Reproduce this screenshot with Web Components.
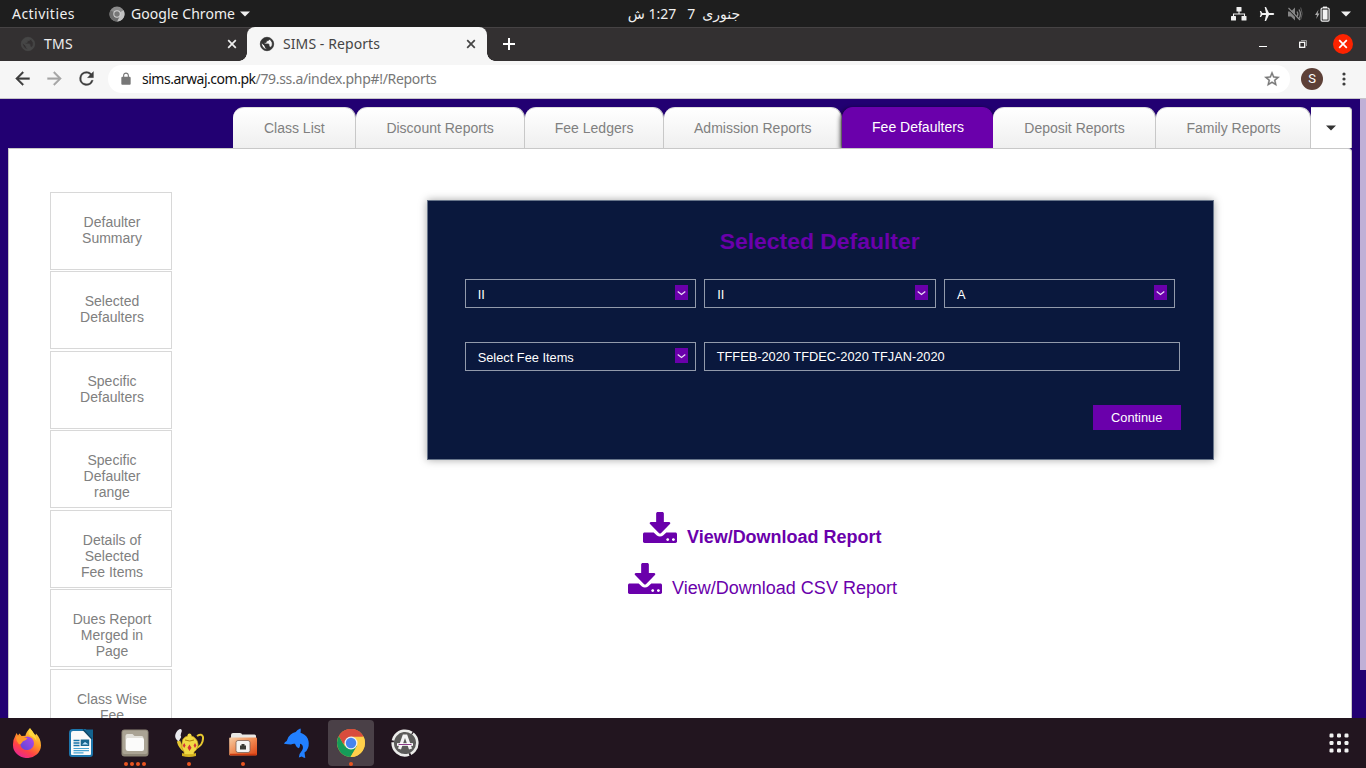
<!DOCTYPE html>
<html lang="en">
<head>
<meta charset="utf-8">
<title>SIMS - Reports</title>
<style>
html,body{margin:0;height:100%;overflow:hidden;background:#220072}
body{font-family:"Liberation Sans",Arial,sans-serif}
</style>
</head>
<body>
<sims-desktop></sims-desktop>
<script>
const define = (name, html, after) => {
  const t = document.createElement('template');
  t.innerHTML = html;
  customElements.define(name, class extends HTMLElement {
    constructor() {
      super();
      this.attachShadow({ mode: 'open' }).appendChild(t.content.cloneNode(true));
    }
    connectedCallback() { if (after) after(this, this.shadowRoot); }
  });
};

/* Single-line label whose tracking is adjusted to fill the width given in "w". */
define('fit-label', `<style>:host{display:inline-block;white-space:pre;flex:none}span{display:inline-block}</style><span><slot></slot></span>`,
  (el, root) => {
    const span = root.querySelector('span');
    const want = parseFloat(el.getAttribute('w'));
    const natural = span.getBoundingClientRect().width;
    el.style.letterSpacing = ((want - natural) / el.textContent.length).toFixed(3) + 'px';
  });

/* Icon set */
const GLYPHS = {
  globe: ['0 0 24 24', '<path fill="currentColor" d="M12 2C6.48 2 2 6.48 2 12s4.48 10 10 10 10-4.48 10-10S17.52 2 12 2zm-1 17.93c-3.95-.49-7-3.85-7-7.93 0-.62.08-1.21.21-1.79L9 15v1c0 1.1.9 2 2 2v1.93zm6.9-2.54c-.26-.81-1-1.39-1.9-1.39h-1v-3c0-.55-.45-1-1-1H8v-2h2c.55 0 1-.45 1-1V7h2c1.1 0 2-.9 2-2v-.41c2.93 1.19 5 4.06 5 7.41 0 2.08-.8 3.97-2.1 5.39z" stroke="currentColor" stroke-width="1.200"/>'],
  back: ['0 0 24 24', '<path fill="currentColor" stroke="currentColor" stroke-width=".4" d="M20 11H7.83l5.59-5.59L12 4l-8 8 8 8 1.41-1.41L7.83 13H20v-2z"/>'],
  forward: ['0 0 24 24', '<path fill="currentColor" stroke="currentColor" stroke-width=".4" d="M4 13h12.17l-5.59 5.59L12 20l8-8-8-8-1.41 1.41L16.17 11H4v2z"/>'],
  reload: ['0 0 24 24', '<path fill="currentColor" stroke="currentColor" stroke-width=".3" d="M17.65 6.35A7.96 7.96 0 0 0 12 4a8 8 0 1 0 7.73 10h-2.08A6 6 0 1 1 12 6c1.66 0 3.14.69 4.22 1.78L13 11h7V4z"/>'],
  lock: ['0 0 24 24', '<path fill="currentColor" d="M18 8h-1V6c0-2.760-2.240-5-5-5S7 3.240 7 6v2H6c-1.100 0-2 .9-2 2v10c0 1.100.9 2 2 2h12c1.100 0 2-.9 2-2V10c0-1.100-.9-2-2-2zM8.900 8V6c0-1.710 1.390-3.100 3.100-3.100s3.100 1.390 3.100 3.100v2z"/>'],
  star: ['0 0 24 24', '<path fill="currentColor" stroke="currentColor" stroke-width=".5" d="M22 9.240l-7.190-.620L12 2 9.190 8.630 2 9.240l5.460 4.730L5.820 21 12 17.270 18.180 21l-1.630-7.030zM12 15.400l-3.760 2.270 1-4.280-3.320-2.880 4.380-.380L12 6.100l1.710 4.040 4.380.380-3.320 2.880 1 4.280z"/>'],
  close: ['0 0 10 10', '<path d="M1.200 1.200l7.600 7.600M8.800 1.200L1.200 8.800" stroke="currentColor" stroke-width="1.700" fill="none"/>'],
  plus: ['0 0 14 14', '<path d="M7 1v12M1 7h12" stroke="currentColor" stroke-width="2" fill="none"/>'],
  down: ['0 0 10 6', '<path d="M0 .5h10L5 5.500z" fill="currentColor"/>'],
  chev: ['0 0 9 6', '<path d="M.7 1.600L4.500 4.400L8.300 1.600" stroke="currentColor" stroke-width="1.300" fill="none"/>'],
  dots: ['0 0 4 14', '<g fill="currentColor"><circle cx="2" cy="2" r="1.600"/><circle cx="2" cy="7" r="1.600"/><circle cx="2" cy="12" r="1.600"/></g>'],
  network: ['0 0 16 14', '<g fill="currentColor"><rect x="5.500" y="0" width="5" height="4.500" rx=".6"/><rect x="0" y="9" width="5" height="4.500" rx=".6"/><rect x="10.500" y="9" width="5" height="4.500" rx=".6"/></g><path d="M8 4v3M2.500 9.500V7h11v2.500" stroke="currentColor" stroke-width="1.100" fill="none"/>'],
  plane: ['0 0 24 24', '<path transform="rotate(90 12 12)" fill="currentColor" d="M22.500 15.500v-2L13.600 9V3.500C13.600 2.400 13 1.200 12 1.200s-1.600 1.200-1.600 2.300V9L1.500 13.500v2l8.900-2V19L7.500 21v1.800l4.500-1.300 4.500 1.300V21l-2.900-2v-5.500z"/>'],
  mute: ['0 0 16 16', '<path d="M1 5.500h3l4-4v13l-4-4H1z" fill="#858585"/><path d="M10 5.500q1.700 2.500 0 5M12 3.500q2.800 4.500 0 9" stroke="#858585" stroke-width="1.300" fill="none"/><path d="M13.700 1.500q3 6 0 12" stroke="#5c5c5c" stroke-width="1" fill="none"/><path d="M1.500 3l11 11.500" stroke="#1e1e1e" stroke-width="1.600"/><path d="M1.500 2l11.500 12" stroke="#8c8c8c" stroke-width="1.100"/>'],
  battery: ['0 0 15 16', '<path d="M3.600 3.500L0 9h2L1.200 13 4.500 7.600H2.600z" fill="#aaa"/><path d="M8 2V.6h4V2" fill="#fff"/><rect x="6.100" y="2" width="8" height="13.200" rx="1.200" stroke="#f4f4f4" stroke-width="1.200" fill="none"/><rect x="7.600" y="3.600" width="5" height="10" fill="#f4f4f4"/>'],
  min: ['0 0 8 10', '<path d="M0 7.500h8" stroke="#fff" stroke-width="1"/>'],
  restore: ['0 0 8 8', '<path d="M2 .5h5.500V6" stroke="#999" fill="none"/><rect x=".7" y="2.300" width="5" height="5" stroke="#fff" stroke-width="1.300" fill="none"/>'],
  chromegrey: ['0 0 16 16', '<circle cx="8" cy="8" r="7.600" fill="#8b8b8b"/><path d="M8 8L14.600 4.300A7.600 7.600 0 0 1 8 15.600L11 9.500z" fill="#c2c2c2"/><path d="M8 8L1.500 4.200A7.600 7.600 0 0 0 8 15.600L11 9.500z" fill="#6c6c6c"/><circle cx="8" cy="8" r="3.700" fill="#d2d2d2"/><circle cx="8" cy="8" r="2.700" fill="#777"/>'],
  download: ['0 0 512 512', '<path fill="currentColor" d="M222 0h68c13.300 0 24 10.700 24 24v140h77.700c17.800 0 26.700 21.500 14.100 34.100L269.700 350c-7.500 7.500-19.800 7.500-27.300 0L106.100 198c-12.600-12.600-3.700-34 14.100-34H198V24c0-13.300 10.700-24 24-24zm290 362v126c0 13.300-10.700 24-24 24H24c-13.300 0-24-10.700-24-24V362c0-13.300 10.700-24 24-24h136.700l49 49c25 25 67 25 92 0l49-49H488c13.300 0 24 10.700 24 24zm-118 94c0-12-10-22-22-22s-22 10-22 22 10 22 22 22 22-10 22-22zm86 0c0-12-10-22-22-22s-22 10-22 22 10 22 22 22 22-10 22-22z"/>'],
  firefox: ['0 0 30 30', '<defs><linearGradient id="a" x1=".8" y1=".05" x2=".25" y2="1"><stop offset="0" stop-color="#ffe141"/><stop offset=".4" stop-color="#ff9525"/><stop offset=".7" stop-color="#ff4245"/><stop offset="1" stop-color="#e5239b"/></linearGradient><linearGradient id="b" x1="1" y1="0" x2="0" y2="1"><stop offset="0" stop-color="#b847e8"/><stop offset="1" stop-color="#5947d8"/></linearGradient></defs><path fill="url(#a)" d="M3 8.500L4.500 5 6 7.500l1.500-2 2 2.500 4-.2q0-3 4.500-7.800 2 2.500 3 5.300l2.500 2L24 5.500q5 5 5 12A14 12.800 0 0 1 1 17Q.8 12 3 8.500z"/><path fill="url(#b)" d="M9 12q2.500-3 6.500-3.500 6 .7 6.500 7a7 7 0 0 1-13.500 2z"/><path fill="#ff982a" d="M4 9q5-2 8.500.5l3 .8q-1 2-4.500 3-1.500 3-4 3-3-3-3-7.300z"/><path fill="#ffd83d" d="M18 .5q6 5.500 6.500 12.500-1.500-3.500-4.500-4.500Q14.500 6.500 18 .5z"/>'],
  writer: ['0 0 30 30', '<path d="M7 2h12l7 7v17a2 2 0 0 1-2 2H6a2 2 0 0 1-2-2V5a3 3 0 0 1 3-3z" fill="#fafafa" stroke="#1d76ac" stroke-width="2"/><path d="M17 1.500h10v9z" fill="#13638f"/><path d="M17 1.500l9 9.500" stroke="#0c4464" stroke-width="1.500"/><path d="M7.500 12.500h6M7.500 15h6M7.500 17.500h6" stroke="#1873a8" stroke-width="1.300"/><rect x="14.700" y="11.500" width="8.500" height="6.500" fill="#17658f"/><path d="M16 16.500l3-2.500 3.500 2.500z" fill="#bde5ff"/><path d="M7.500 20.500h15.500M7.500 22.700h15.500M7.500 24.900h10" stroke="#47a2d0" stroke-width="1.200"/>'],
  files: ['0 0 30 30', '<rect x="1.500" y="1.500" width="27" height="27" rx="3" fill="#8e8778"/><rect x="2.500" y="2.500" width="25" height="23.500" rx="2" fill="#aaa394"/><path d="M7.500 6h5l2 2h7q2 0 2 2v10.500q0 2-2 2h-14q-2 0-2-2V8q0-2 2-2z" fill="#e2e0da"/><path d="M7 10h15q2 0 2 2v9q0 2-2 2H8q-2 0-2-2v-9z" fill="#fbfbfa"/>'],
  teapot: ['0 0 30 30', '<path d="M23 8q5-3 6 1 .5 8-6.500 11" fill="none" stroke="#e5c62f" stroke-width="2"/><path d="M4.500 13q1.500 6 6 9" fill="none" stroke="#e5c62f" stroke-width="3.500"/><path d="M11 9q5-3 9 0 5 4 4 9-1 4-4 6v3H10v-3q-3-4-2-9 0-4 3-6z" fill="#f1da45" stroke="#b98c16" stroke-width=".7"/><path d="M8 25q7 3 14 0v3q-7 2-14 0z" fill="#d5b21f"/><circle cx="15.500" cy="7.500" r="2" fill="#f1da45"/><g fill="#d3333b"><path d="M15.500 16.500l2 3.200-2 3.200-2-3.200zM10.200 15l1.400 2.500-1.400 2.500-1.400-2.500zM21 15l1.400 2.500-1.400 2.500-1.400-2.500z"/></g><path d="M11 12q5 2 9 0" stroke="#ad7b0d" fill="none"/><path d="M4.500 13.500Q0 10 1.500 6T6 1q3 0 1 4.500-.8 2 .2 3.500-1 2-2.700 4.500z" fill="#e9e9ee"/>'],
  folder: ['0 0 30 30', '<defs><linearGradient id="f" x2="1" y2="1"><stop offset="0" stop-color="#f5cda5"/><stop offset=".5" stop-color="#f08a52"/><stop offset="1" stop-color="#dd4414"/></linearGradient></defs><path d="M3 7q0-2 2-2h7q2 0 2 1.500h12.500q1.500 0 1.500 1.500v8H3z" fill="#e9e7e4"/><rect x="1.200" y="9.500" width="27.800" height="18" rx="1" fill="url(#f)"/><path d="M2 26.500h26" stroke="#cd3b11" stroke-width="1.500"/><rect x="8" y="12.500" width="14" height="12" rx="2" fill="#f4f4f2" stroke="#7b6256" stroke-width=".8"/><path d="M12 21.500v-4h1.500V16h3v1.500H18v4z" fill="#393b35"/>'],
  dolphin: ['0 0 30 30', '<path fill="#2280ff" d="M2 15.800q.5-1.500 2.700-2.800.8-4 4-6.500 2-2 5-2.500 1.500-2.500 4.500-3.500 1 .2.300 4.300 5 1.500 7.200 5.700 2 5 .3 9.500-1 3-3.500 4.500.5 3.500.8 5.500-2-.3-3.500-1.500-1.500.5-3 1 0-3.500 2.500-6 2.500-3 1.200-6-1-1.500-2.500-1.700.5 2.500-1 4.500-2.500-.5-4-4.500-2-.5-4 .8-3 0-7-.8z"/>'],
  chrome: ['0 0 30 30', '<circle cx="15" cy="15" r="14" fill="#e8b936"/><path d="M15 15L2.900 8A14 14 0 0 1 27.100 8z" fill="#d94c3d"/><path d="M2.900 8a14 14 0 0 0 11.600 21L21 18 9 18.500z" fill="#159c59"/><path d="M15 8.500h12.400a14 14 0 0 1-12.900 20.500L21 18z" fill="#ffd04b"/><path d="M2.900 8A14 14 0 0 1 27.400 8.500H15v7H7z" fill="#d94c3d"/><circle cx="15" cy="15" r="6.500" fill="#f1f1f1"/><circle cx="15" cy="15" r="5.200" fill="#4684ef"/>'],
  updater: ['0 0 30 30', '<circle cx="15" cy="15" r="11.500" fill="#5c5b5a"/><circle cx="15" cy="15" r="12.300" fill="none" stroke="#ececea" stroke-width="2.600" stroke-dasharray="24 1.760" transform="rotate(-50 15 15)"/><path d="M9.500 21L14 8h2l4.500 13" fill="none" stroke="#f3f3f3" stroke-width="3.200"/><path d="M7 16.500h16" stroke="#fff" stroke-width="2.600"/><path d="M8.500 16.500h13" stroke="#8d3c88" stroke-width="1"/>'],
  grid: ['0 0 20 20', '<g fill="#f2f2f2">' + [2.500, 10, 17.500].map(y => [2.500, 10, 17.500].map(x => `<rect x="${x - 2}" y="${y - 2}" width="4" height="4" rx="1.200"/>`).join('')).join('') + '</g>']
};
define('ui-icon', `<style>:host{display:block;flex:none}svg{display:block;width:100%;height:100%}</style><div></div>`, (el, root) => {
  const [box, body] = GLYPHS[el.getAttribute('name')];
  const [w, h] = el.getAttribute('size').split('x');
  el.style.width = w + 'px'; el.style.height = (h || w) + 'px';
  const d = root.querySelector('div');
  d.style.height = '100%';
  d.innerHTML = `<svg viewBox="${box}" preserveAspectRatio="none">${body}</svg>`;
});

define('top-panel', `<style>
:host{display:flex;align-items:center;height:27px;background:#1e1e1e;color:#f0f0f0;font:14px/27px "Noto Sans",sans-serif;box-sizing:border-box;padding:0 15px 0 12px}
.l,.r{flex:1;display:flex;align-items:center}.r{justify-content:flex-end}
.l ui-icon[name=chromegrey]{margin:0 6px 0 34px}.l ui-icon[name=down]{margin-left:5px}
.c{direction:rtl;display:flex;font:14px/27px "Noto Sans","DejaVu Sans",sans-serif;margin-left:5px}.c .t{margin-right:11px}.c .m{margin-left:7px}
</style>
<div class="l"><fit-label w="63">Activities</fit-label><ui-icon name="chromegrey" size="16"></ui-icon><fit-label w="104">Google Chrome</fit-label><ui-icon name="down" size="10x6"></ui-icon></div>
<div class="c"><span class="m">جنوری</span><span>7</span><span class="t">1:27 ش</span></div>
<div class="r"><ui-icon name="network" size="16x14"></ui-icon><ui-icon name="plane" size="16" style="margin:0 12px"></ui-icon><ui-icon name="mute" size="16"></ui-icon><ui-icon name="battery" size="15x16" style="margin:0 11px 0 12px"></ui-icon><ui-icon name="down" size="10x6"></ui-icon></div>`);

define('browser-tab', `<style>
:host{display:flex;align-items:center;position:relative;box-sizing:border-box;height:34px;width:247px;padding:0 10px 0 20px;color:#eee;font:14px/34px "Noto Sans",sans-serif}
:host([active]){width:240px;padding:0 11px 0 12px;background:#f6f6f6;color:#454545;border-radius:8px 8px 0 0}
:host([active])::before,:host([active])::after{content:"";position:absolute;bottom:0;width:8px;height:8px}
:host([active])::before{left:-8px;background:radial-gradient(circle at 0 0,transparent 7.500px,#f6f6f6 8px)}
:host([active])::after{right:-8px;background:radial-gradient(circle at 100% 0,transparent 7.500px,#f6f6f6 8px)}
.icon{color:#464646;margin-right:8px}:host([active]) .icon{color:#333}.x{margin-left:auto}
</style><ui-icon class="icon" name="globe" size="16"></ui-icon><slot></slot><ui-icon class="x" name="close" size="10"></ui-icon>`);

define('tab-strip', `<style>
:host{display:flex;align-items:center;height:34px;background:#333031;color:#fff;box-shadow:inset 0 1px #464344}
.win{margin-left:auto;display:flex;align-items:center;padding-right:13px}
.red{width:20px;height:20px;border-radius:50%;background:#fc2300;display:grid;place-items:center}
</style>
<browser-tab><fit-label w="29">TMS</fit-label></browser-tab><browser-tab active><fit-label w="97">SIMS - Reports</fit-label></browser-tab>
<ui-icon name="plus" size="14" style="margin-left:15px"></ui-icon>
<div class="win"><ui-icon name="min" size="8x10"></ui-icon><ui-icon name="restore" size="8" style="margin:0 26px 0 32px"></ui-icon><div class="red"><ui-icon name="close" size="10"></ui-icon></div></div>`);

define('tool-bar', `<style>
:host{display:flex;align-items:center;height:38px;box-sizing:border-box;padding:0 20px 2px 12px;background:#f6f6f6;border-bottom:1px solid #c5c3c9;color:#3d3d3d}
.pill{flex:1;display:flex;align-items:center;height:28px;background:#fff;border-radius:14px;margin:0 11px 0 11px;padding:0 9px 0 11px;font:14px/28px "Noto Sans",sans-serif;color:#777}
b{font-weight:400;color:#111}
.av{width:22px;height:22px;border-radius:50%;background:#5d4037;color:#fff;font:13px/22px Roboto,sans-serif;text-align:center;margin-right:19px}
</style>
<ui-icon name="back" size="21"></ui-icon><ui-icon name="forward" size="21" style="margin:0 11px;color:#a5a5a5"></ui-icon><ui-icon name="reload" size="21"></ui-icon>
<div class="pill"><ui-icon name="lock" size="14" style="margin-right:9px"></ui-icon><b><fit-label w="113.500">sims.arwaj.com.pk</fit-label></b><fit-label w="181">/79.ss.a/index.php#!/Reports</fit-label><ui-icon name="star" size="18" style="margin-left:auto"></ui-icon></div>
<div class="av">S</div><ui-icon name="dots" size="4x14"></ui-icon>`);

define('report-tab', `<style>
:host{display:block;position:relative;box-sizing:border-box;height:41px;border-right:1px solid #c8c8c8;border-top:1px solid #ddd;border-radius:11px 11px 0 0;background:linear-gradient(#fff,#efefef);color:#808080;font:14px/40px "Liberation Sans",Arial,sans-serif;text-align:center;white-space:nowrap;padding-left:1px}
:host([active]){background:#6a00ab;border-color:#6a00ab;color:#fff;line-height:38px;box-shadow:-1px 2px 5px 0 rgba(0,0,0,.9);padding-left:2px}
:host([menu]){border-radius:0 4px 0 0;background:#fff;color:#333;display:grid;place-items:center}
</style><slot></slot>`);

define('report-tabs', `<style>
:host{display:grid;grid-template-columns:122.600px 169px 139px 178.400px 151px 163px 155px 41px;padding:8px 0 0 233px;height:41px;overflow:hidden}
</style>
<report-tab>Class List</report-tab><report-tab>Discount Reports</report-tab><report-tab>Fee Ledgers</report-tab><report-tab>Admission Reports</report-tab><report-tab active>Fee Defaulters</report-tab><report-tab>Deposit Reports</report-tab><report-tab>Family Reports</report-tab><report-tab menu><ui-icon name="down" size="10x6"></ui-icon></report-tab>`);

define('side-item', `<style>
:host{display:block;box-sizing:border-box;width:122px;height:78px;border:1px solid #d8d8d8;padding-top:21px;color:#808080;font:14px/16px "Liberation Sans",Arial,sans-serif;text-align:center;padding-left:2px}
</style><slot></slot>`);
define('side-menu', `<style>:host{display:flex;flex-direction:column;gap:1.490px;width:122px;flex:none}side-item{flex:none}</style>
<side-item>Defaulter<br>Summary</side-item><side-item>Selected<br>Defaulters</side-item><side-item>Specific<br>Defaulters</side-item><side-item>Specific<br>Defaulter<br>range</side-item><side-item>Details of<br>Selected<br>Fee Items</side-item><side-item>Dues Report<br>Merged in<br>Page</side-item><side-item>Class Wise<br>Fee</side-item>`);

define('drop-field', `<style>
:host{display:flex;align-items:center;justify-content:space-between;box-sizing:border-box;height:29px;border:1px solid #929aab;padding:0 7px 0 12px;color:#fff;font:12.800px/28px "Liberation Sans",Arial,sans-serif}
i{width:13px;height:15px;background:#6a00ab;display:grid;place-items:center;margin-bottom:2px;color:#eadcf5}span{padding-top:2px}
</style><span><slot></slot></span><i><ui-icon name="chev" size="9x6"></ui-icon></i>`);

define('defaulter-form', `<style>
:host{display:block;box-sizing:border-box;width:787px;height:260px;background:#0a183d;border:1px solid #68758a;box-shadow:0 0 8px rgba(0,0,0,.35);padding:0 32px 0 37px}
h2{margin:0 6px 0 0;padding:25px 0 0;height:53px;box-sizing:content-box;font:bold 22.900px/31px "Liberation Sans",Arial,sans-serif;color:#6a00ab;text-align:center}
.row{display:grid;grid-template-columns:231px 231.400px 231.400px;gap:8.500px;margin-bottom:34px}
.row.two{grid-template-columns:231px 476px}
.text{box-sizing:border-box;height:29px;border:1px solid #929aab;padding-left:11.500px;color:#fff;font:12.800px/28px "Liberation Sans",Arial,sans-serif}
button{display:block;margin:0 0 0 auto;width:88px;height:25px;border:0;padding:1px 0 0;background:#6a00ab;color:#fff;font:12.800px/24px "Liberation Sans",Arial,sans-serif}
</style>
<h2><fit-label w="200">Selected Defaulter</fit-label></h2>
<div class="row"><drop-field>II</drop-field><drop-field>II</drop-field><drop-field>A</drop-field></div>
<div class="row two"><drop-field>Select Fee Items</drop-field><div class="text"><fit-label w="228">TFFEB-2020 TFDEC-2020 TFJAN-2020</fit-label></div></div>
<button>Continue</button>`);

define('download-link', `<style>
:host{display:flex;align-items:flex-start;height:51px;color:#6a00ab;font:18px/22px "Liberation Sans",Arial,sans-serif}
:host([strong]){font-weight:bold}div{margin:14px 0 0 10px}
</style><ui-icon name="download" size="34x31"></ui-icon><div><slot></slot></div>`);

define('reports-page', `<style>
:host{display:block;position:relative;height:619px;background:#220072;overflow:hidden}
.sheet{box-sizing:border-box;margin:0 14px 0 8px;height:570px;background:#fff;border:1px solid #c8c8c8;border-bottom:0;display:flex;padding:43px 0 0 41px;border-radius:0 4px 0 0}
main{margin:8px 0 0 254.700px}
.links{padding:52px 0 0 201.300px}
.thumb{position:absolute;right:0;top:0;width:6px;height:571px;background:#bfb0d6}
</style>
<report-tabs></report-tabs>
<div class="sheet"><side-menu></side-menu><main><defaulter-form></defaulter-form>
<div class="links"><download-link strong style="margin-left:15px"><fit-label w="194.500">View/Download Report</fit-label></download-link><download-link><fit-label w="225">View/Download CSV Report</fit-label></download-link></div></main></div>
<div class="thumb"></div>`);

define('dock-app', `<style>
:host{display:flex;flex-direction:column;align-items:center;box-sizing:border-box;width:46px;height:46px;margin:0 4px;padding-top:8px;border-radius:4px;flex:none}
:host([active]){background:#4a4047}
.d{display:flex;gap:2px;height:4px;margin-top:4px}.d i{width:4px;height:4px;border-radius:50%;background:#e95420}
</style><slot></slot><div class="d"></div>`, (el, root) => {
  root.querySelector('.d').innerHTML = '<i></i>'.repeat(+el.getAttribute('windows') || 0);
});
define('app-dock', `<style>
:host{display:flex;box-sizing:border-box;height:50px;background:#22151f;padding:2px 17px 0 0}
.grid{margin:13px 0 0 auto}
</style>
<dock-app><ui-icon name="firefox" size="30"></ui-icon></dock-app><dock-app><ui-icon name="writer" size="30"></ui-icon></dock-app><dock-app windows="4"><ui-icon name="files" size="30"></ui-icon></dock-app><dock-app windows="1"><ui-icon name="teapot" size="30"></ui-icon></dock-app><dock-app windows="1"><ui-icon name="folder" size="30"></ui-icon></dock-app><dock-app><ui-icon name="dolphin" size="30"></ui-icon></dock-app><dock-app active windows="1"><ui-icon name="chrome" size="30"></ui-icon></dock-app><dock-app><ui-icon name="updater" size="30"></ui-icon></dock-app>
<ui-icon class="grid" name="grid" size="20"></ui-icon>`);

define('sims-desktop', `<style>:host{display:flex;flex-direction:column;width:1366px;height:768px;overflow:hidden}:host>*{flex:none}</style>
<top-panel></top-panel><tab-strip></tab-strip><tool-bar></tool-bar><reports-page></reports-page><app-dock></app-dock>`);
</script>
</body>
</html>
